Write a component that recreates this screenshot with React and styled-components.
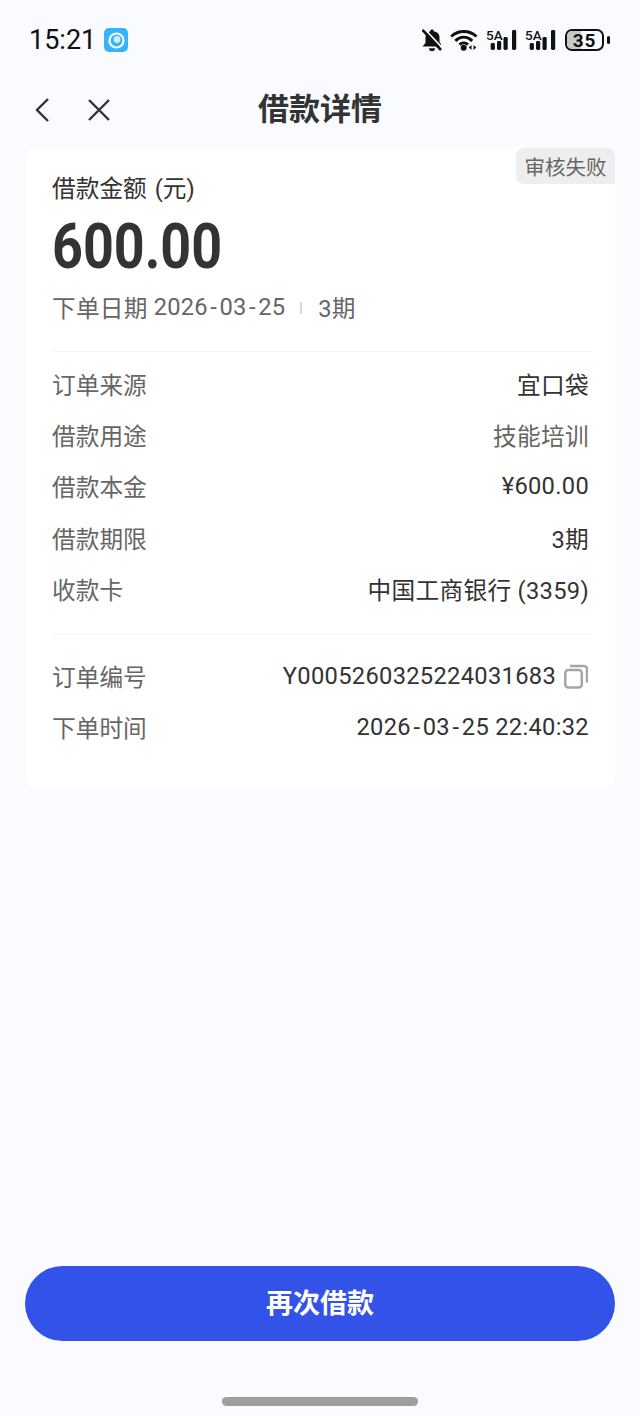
import styled, { createGlobalStyle } from "styled-components";

const CJK = `Roboto, "Noto Sans CJK SC", sans-serif`;

const GlobalStyle = createGlobalStyle`
  html, body {
    margin: 0;
    padding: 0;
    background: #f9fbfe;
  }
  * {
    box-sizing: border-box;
  }
`;

const Page = styled.div`
  width: 640px;
  height: 1416px;
  display: flex;
  flex-direction: column;
  background: #f9fbfe;
  font-family: ${CJK};
  overflow: hidden;
`;

const StatusBar = styled.div`
  height: 80px;
  padding: 0 30px 0 29px;
  display: flex;
  align-items: center;
  justify-content: space-between;
`;

const StatusLeft = styled.div`
  display: flex;
  align-items: center;
  gap: 8px;
`;

const Clock = styled.span`
  font-size: 27px;
  color: #111;
`;

const StatusRight = styled.div`
  display: flex;
  align-items: center;
  gap: 8px;
`;

const NavBar = styled.div`
  height: 60px;
  padding: 0 29px 0 33px;
  position: relative;
  display: flex;
  align-items: center;
  gap: 36px;
`;

const NavTitle = styled.h1`
  position: absolute;
  left: 0;
  right: 0;
  top: 10px;
  margin: 0;
  line-height: 40px;
  text-align: center;
  font-size: 31px;
  font-weight: 700;
  color: #333;
`;

const Card = styled.section`
  position: relative;
  margin: 8px 25px 0 26px;
  height: 640px;
  padding: 24px 26px 0;
  background: #fff;
  border-radius: 8px;
`;

const StatusTag = styled.div`
  position: absolute;
  top: 0;
  right: 0;
  width: 99px;
  height: 36px;
  display: flex;
  align-items: center;
  justify-content: center;
  background: #eeeeee;
  border-radius: 8px 8px 0 8px;
  font-size: 20.5px;
  color: #666;
`;

const AmountLabel = styled.div`
  height: 34px;
  line-height: 34px;
  font-size: 23.7px;
  word-spacing: 2px;
  color: #333;
`;

const Amount = styled.div`
  margin-top: 5px;
  height: 72px;
  line-height: 72px;
  font-size: 63px;
  font-weight: 700;
  color: #333;
  transform: scaleX(0.855);
  transform-origin: left center;
`;

const MetaRow = styled.div`
  margin-top: 7px;
  height: 34px;
  display: flex;
  align-items: center;
  font-size: 23.7px;
  letter-spacing: 0.2px;
  color: #666;
  white-space: pre;
`;

const MetaDivider = styled.span`
  width: 2px;
  height: 12px;
  margin: 2px 16px 0 15px;
  background: #d8d8d8;
`;

const Divider = styled.div`
  height: 1px;
  margin-top: ${(p) => p.$top || 0}px;
  margin-right: -2px;
  background: #f4f4f4;
`;

const Group = styled.div`
  display: flex;
  flex-direction: column;
  padding-top: ${(p) => p.$top}px;
  padding-bottom: ${(p) => p.$bottom}px;
`;

const Row = styled.div`
  height: 51.3px;
  display: flex;
  align-items: center;
  justify-content: space-between;
  font-size: 23.7px;
`;

const RowLabel = styled.span`
  color: #666;
`;

const RowValue = styled.span`
  display: flex;
  align-items: center;
  gap: 8px;
  letter-spacing: 0.3px;
  white-space: pre;
  color: ${(p) => (p.$muted ? "#666" : "#333")};
`;

const Dash = styled.span`
  margin: 0 2.5px;
`;

const Spacer = styled.div`
  flex: 1;
`;

const PrimaryButton = styled.button`
  margin: 0 25px;
  height: 75px;
  padding: 0 0 5px;
  border: 0;
  border-radius: 38px;
  background: #3353e8;
  color: #fff;
  font-family: inherit;
  font-size: 27px;
  font-weight: 700;
`;

const HomeArea = styled.div`
  height: 75px;
  display: flex;
  justify-content: center;
  padding-top: 56px;
`;

const HomeBar = styled.div`
  width: 196px;
  height: 9px;
  border-radius: 5px;
  background: #9e9e9e;
`;

function AppBadge() {
  return (
    <svg width="24" height="24" viewBox="0 0 24 24">
      <rect width="24" height="24" rx="5" fill="#35b4fb" />
      <circle cx="12.500" cy="12.500" r="7" fill="none" stroke="#fff" strokeWidth="2.200" />
      <circle cx="13" cy="11.500" r="3.400" fill="#cfeeff" />
    </svg>
  );
}

function BellOff() {
  return (
    <svg width="20" height="24" viewBox="0 0 20 24">
      <path d="M10 1.500c-1.100 0-1.700.7-1.800 1.700C5 4 3.500 6.600 3.500 9.500V15L.5 18.500H19V16l-1.500-2V9.500c0-3-1.600-5.500-5.700-6.300C11.700 2.200 11.100 1.500 10 1.500z" fill="#111" />
      <path d="M7 20.200h6a3 3 0 0 1-6 0z" fill="#111" />
      <path d="M2 .5 19.500 19" stroke="#f9fbfe" strokeWidth="1.800" />
      <path d="M.5 2 19 22" stroke="#111" strokeWidth="2.600" />
    </svg>
  );
}

function Wifi() {
  return (
    <svg width="28" height="22" viewBox="0 0 28 22">
      <path d="M1.200 7.500C8.500.8 19 .8 26.500 7.500" fill="none" stroke="#111" strokeWidth="3" />
      <path d="M5.300 11.800C10.500 7 17 7 22.300 11.800" fill="none" stroke="#111" strokeWidth="3" />
      <path d="M9.500 15.600C12 13.500 15.500 13.500 18 15.600" fill="none" stroke="#111" strokeWidth="3" />
      <circle cx="13.700" cy="18.700" r="3" fill="#111" />
      <path d="M21.500 16v5l-2.800-2.500zM23.500 16v5l2.800-2.500z" fill="#111" />
    </svg>
  );
}

const SignalLabel = styled.span`
  position: absolute;
  left: 0;
  top: 0;
  font-size: 13.500px;
  font-weight: 500;
  line-height: 14px;
  color: #111;
`;

const SignalBox = styled.span`
  position: relative;
  display: block;
  width: 31px;
  height: 24px;
`;

function Signal() {
  return (
    <SignalBox>
      <SignalLabel>5A</SignalLabel>
      <svg width="31" height="24" viewBox="0 0 31 24">
        <rect x="4.700" y="15" width="4.200" height="7" rx="1.400" fill="#111" />
        <rect x="11" y="13" width="4.200" height="9" rx="1.400" fill="#111" />
        <rect x="17.500" y="9" width="4.200" height="13" rx="1.400" fill="#111" />
        <rect x="26" y="2" width="4.200" height="20" rx="1.400" fill="#111" />
      </svg>
    </SignalBox>
  );
}

const BatteryBox = styled.span`
  position: relative;
  display: flex;
  align-items: center;
  justify-content: center;
  width: 39px;
  height: 22px;
  margin-left: 1px;
  border: 2px solid #111;
  border-radius: 7px;
  font-size: 19px;
  font-weight: 700;
  letter-spacing: 0.8px;
  color: #111;
  overflow: hidden;
`;

const BatteryFill = styled.span`
  position: absolute;
  left: 0;
  top: 0;
  bottom: 0;
  background: #c9c9c9;
`;

const BatteryText = styled.span`
  position: relative;
`;

const BatteryCap = styled.span`
  width: 3px;
  height: 8px;
  margin-left: -5px;
  border-radius: 2px;
  background: #111;
`;

function Battery() {
  return (
    <>
      <BatteryBox>
        <BatteryFill style={{ width: "40%" }} />
        <BatteryText>35</BatteryText>
      </BatteryBox>
      <BatteryCap />
    </>
  );
}

function BackIcon() {
  return (
    <svg width="18" height="26" viewBox="0 0 18 26">
      <path d="M15 2 4 13l11 11" fill="none" stroke="#333" strokeWidth="2.400" />
    </svg>
  );
}

function CloseIcon() {
  return (
    <svg width="24" height="24" viewBox="0 0 24 24">
      <path d="M2 2l20 20M22 2 2 22" fill="none" stroke="#333" strokeWidth="2.400" />
    </svg>
  );
}

function CopyIcon() {
  return (
    <svg width="24" height="25" viewBox="0 0 24 25" style={{ marginRight: 1 }}>
      <rect x="1.300" y="6" width="16.500" height="17.500" rx="3" fill="none" stroke="#a6a6a6" strokeWidth="2.500" />
      <path d="M6 2h14A3 3 0 0 1 23 5v13.500" fill="none" stroke="#a6a6a6" strokeWidth="2.500" />
    </svg>
  );
}

// 날짜의 하이픈이 폰트보다 넓어서 따로 감싼다
function Stamp({ value }) {
  return value.split("-").map((part, i) => (
    <span key={i}>
      {i > 0 && <Dash>-</Dash>}
      {part}
    </span>
  ));
}

const orderRows = [
  { label: "订单来源", value: "宜口袋" },
  { label: "借款用途", value: "技能培训", muted: true },
  { label: "借款本金", value: "¥600.00" },
  { label: "借款期限", value: "3期" },
  { label: "收款卡", value: "中国工商银行 (3359)" },
];

export default function App() {
  return (
    <Page>
      <GlobalStyle />
      <StatusBar>
        <StatusLeft>
          <Clock>15:21</Clock>
          <AppBadge />
        </StatusLeft>
        <StatusRight>
          <BellOff />
          <Wifi />
          <Signal />
          <Signal />
          <Battery />
        </StatusRight>
      </StatusBar>
      <NavBar>
        <BackIcon />
        <CloseIcon />
        <NavTitle>借款详情</NavTitle>
      </NavBar>
      <Card>
        <StatusTag>审核失败</StatusTag>
        <AmountLabel>借款金额 (元)</AmountLabel>
        <Amount>600.00</Amount>
        <MetaRow>
          下单日期 <Stamp value="2026-03-25" />
          <MetaDivider />
          3期
        </MetaRow>
        <Divider $top={27} />
        <Group $top={6} $bottom={20}>
          {orderRows.map((row) => (
            <Row key={row.label}>
              <RowLabel>{row.label}</RowLabel>
              <RowValue $muted={row.muted}>{row.value}</RowValue>
            </Row>
          ))}
        </Group>
        <Divider />
        <Group $top={15} $bottom={0}>
          <Row>
            <RowLabel>订单编号</RowLabel>
            <RowValue>
              Y0005260325224031683
              <CopyIcon />
            </RowValue>
          </Row>
          <Row>
            <RowLabel>下单时间</RowLabel>
            <RowValue>
              <span>
                <Stamp value="2026-03-25" /> 22:40:32
              </span>
            </RowValue>
          </Row>
        </Group>
      </Card>
      <Spacer />
      <PrimaryButton>再次借款</PrimaryButton>
      <HomeArea>
        <HomeBar />
      </HomeArea>
    </Page>
  );
}
